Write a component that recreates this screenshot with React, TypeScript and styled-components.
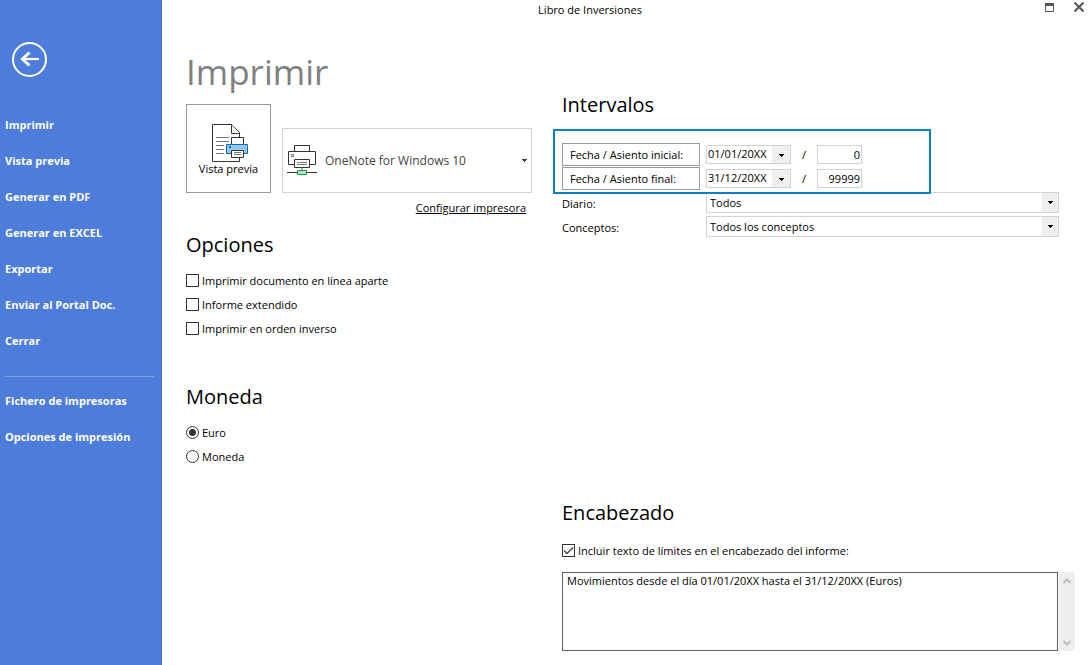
import React from "react";
import styled, { createGlobalStyle } from "styled-components";

const GlobalStyle = createGlobalStyle`
  * { box-sizing: border-box; }
  body {
    margin: 0;
    background: #fff;
    color: #000;
    font: 11px/16px "Open Sans", "Noto Sans", sans-serif;
  }
  button, input, select, textarea { font: inherit; color: inherit; margin: 0; border-radius: 0; }
`;

const Window = styled.div`
  display: flex;
  min-height: 100vh;
`;

const Sidebar = styled.aside`
  flex: 0 0 162px;
  padding: 42px 8px 20px 5px;
  background: #4d7cdb;
  color: #fff;
`;

const BackButton = styled.button`
  display: block;
  width: 36px;
  height: 36px;
  margin-left: 6px;
  padding: 0;
  border: 0;
  background: none;
`;

const Menu = styled.nav`
  display: flex;
  flex-direction: column;
  margin-top: 29px;
`;

const MenuLink = styled.a`
  font-weight: bold;
  line-height: 36px;
  color: inherit;
  text-decoration: none;
  white-space: nowrap;
`;

const Divider = styled.hr`
  width: 100%;
  height: 1px;
  margin: 17px 0 6px;
  border: 0;
  background: #7d9fe5;
`;

const Main = styled.main`
  flex: 1;
  min-width: 0;
`;

const TitleBar = styled.header`
  display: flex;
  height: 20px;
`;

const WindowTitle = styled.div`
  flex: 1;
  text-align: center;
  line-height: 20px;
`;

const WindowButtons = styled.div`
  display: flex;
  flex: 0 0 73px;
  justify-content: flex-end;
  gap: 14px;
  padding-right: 4px;
`;

const WindowButton = styled.button`
  width: 16px;
  height: 14px;
  padding: 0;
  border: 0;
  background: none;
`;

const Columns = styled.div`
  display: grid;
  grid-template-columns: 346px minmax(0, 1fr);
  column-gap: 30px;
  padding: 0 16px 14px 24px;
`;

const PageTitle = styled.h1`
  margin: 26px 0 6px;
  font-size: 35px;
  font-weight: 400;
  line-height: 52px;
  color: #808080;
`;

const SectionTitle = styled.h2<{ $above?: number; $below?: number }>`
  margin: ${(p) => p.$above ?? 0}px 0 ${(p) => p.$below ?? 10}px;
  font-size: 20px;
  font-weight: 400;
  line-height: 28px;
`;

const PrinterRow = styled.div`
  display: flex;
  align-items: flex-end;
  gap: 11px;
`;

const PreviewButton = styled.button`
  display: flex;
  flex-direction: column;
  align-items: center;
  width: 85px;
  height: 89px;
  padding: 19px 0 0;
  border: 1px solid #999;
  background: #fff;
  line-height: 14px;
`;

const SelectWrap = styled.div`
  position: relative;
  flex: 1;
  min-width: 0;
`;

const PrinterSelect = styled.select`
  display: block;
  appearance: none;
  width: 100%;
  height: 65px;
  padding: 0 20px 0 42px;
  border: 1px solid #d3d3d3;
  background: #fff;
  font-size: 12px;
  color: #444;
`;

const PrinterGlyph = styled.span`
  position: absolute;
  top: 17px;
  left: 5px;
  height: 32px;
  pointer-events: none;
`;

const PrinterArrow = styled.span`
  position: absolute;
  top: 0;
  right: 5px;
  display: flex;
  align-items: center;
  height: 100%;
  pointer-events: none;
`;

const ConfigLine = styled.div`
  padding: 6px 6px 0 0;
  text-align: right;
  line-height: 18px;
`;

const ConfigLink = styled.a`
  color: #000;
`;

const Choice = styled.label`
  display: flex;
  align-items: center;
  gap: 3px;
  height: 24px;
`;

const Check = styled.input`
  appearance: none;
  width: 13px;
  height: 13px;
  margin-bottom: 1px;
  border: 1px solid #333;
  background: #fff;
  &:checked {
    background: #fff
      url("data:image/svg+xml,%3Csvg xmlns='http://www.w3.org/2000/svg' width='11' height='11'%3E%3Cpath d='M1 5.5L4 8.5L10 2.5' fill='none' stroke='%23444' stroke-width='1.3'/%3E%3C/svg%3E")
      center no-repeat;
  }
`;

const Radio = styled.input`
  appearance: none;
  width: 13px;
  height: 13px;
  margin-bottom: 1px;
  border: 1px solid #333;
  border-radius: 50%;
  background: #fff;
  &:checked {
    background: radial-gradient(circle, #333 3px, #fff 4px);
  }
`;

const RightColumn = styled.div`
  padding-top: 71px;
`;

const Fields = styled.div`
  padding-right: 16px;
`;

const DateGroup = styled.div`
  position: relative;
  z-index: 1;
  width: 378px;
  height: 65px;
  margin: 0 0 -2px -9px;
  padding: 11px 0 0 7px;
  border: 2px solid #0a80c8;
`;

const DateRow = styled.div`
  display: flex;
  align-items: center;
  height: 24px;
`;

const RangeButton = styled.button`
  width: 138px;
  height: 23px;
  padding: 1px 7px 0;
  border: 1px solid #999;
  background: #fff;
  text-align: left;
`;

const DateCombo = styled.div`
  display: flex;
  width: 85px;
  height: 19px;
  margin-left: 6px;
  border: 1px solid #d3d3d3;
`;

const DateInput = styled.input`
  flex: 1;
  min-width: 0;
  padding: 0 0 0 1px;
  border: 0;
  background: #fff;
`;

const DropButton = styled.button`
  display: flex;
  align-items: center;
  justify-content: center;
  width: 18px;
  padding: 2px 0 0;
  border: 0;
  background: #efefef;
`;

const Slash = styled.span`
  width: 26px;
  padding-top: 2px;
  text-align: center;
`;

const NumberInput = styled.input`
  width: 45px;
  height: 19px;
  padding: 0 1px;
  border: 1px solid #d3d3d3;
  background: #fff;
  text-align: right;
`;

const FieldRow = styled.div`
  display: flex;
  align-items: center;
  height: 21px;
  margin-bottom: 3px;
`;

const FieldLabel = styled.label`
  flex: 0 0 144px;
  padding-top: 3px;
`;

const FieldSelect = styled.select`
  display: block;
  appearance: none;
  width: 100%;
  height: 21px;
  padding: 0 20px 0 3px;
  border: 1px solid #d3d3d3;
  background: #fff;
`;

const FieldArrow = styled.span`
  position: absolute;
  top: 1px;
  right: 1px;
  bottom: 1px;
  display: flex;
  align-items: center;
  justify-content: center;
  width: 16px;
  background: #efefef;
  pointer-events: none;
`;

const TextRow = styled.div`
  display: flex;
  gap: 1px;
  height: 79px;
  margin-top: 9px;
`;

const HeaderText = styled.textarea`
  flex: 1;
  min-width: 0;
  padding: 0 4px;
  border: 1px solid #606060;
  background: #fff;
  resize: none;
  overflow: hidden;
`;

const ScrollStrip = styled.div`
  display: flex;
  flex-direction: column;
  justify-content: space-between;
  width: 16px;
  background: #efefef;
`;

const ScrollButton = styled.button`
  display: flex;
  align-items: center;
  justify-content: center;
  height: 17px;
  padding: 0;
  border: 0;
  background: none;
`;

const Arrow = ({ color = "#000" }: { color?: string }) => (
  <svg width="5" height="3" viewBox="0 0 5 3" shapeRendering="crispEdges" aria-hidden="true">
    <path d="M0 0H5V1H4V2H3V3H2V2H1V1H0Z" fill={color} />
  </svg>
);

const Chevron = ({ down }: { down?: boolean }) => (
  <svg width="8" height="6" viewBox="0 0 8 6" aria-hidden="true">
    <path d={down ? "M.5 1L4 4.5L7.5 1" : "M.5 5L4 1.5L7.5 5"} fill="none" stroke="#bcbcbc" strokeWidth="2" />
  </svg>
);

const BackIcon = () => (
  <svg width="36" height="36" viewBox="0 0 36 36" fill="none" stroke="#fff" aria-hidden="true">
    <circle cx="18.5" cy="17.5" r="16.5" strokeWidth="2" />
    <path d="M11 17H28" strokeWidth="2.2" />
    <path d="M18.5 10.5L11.5 17L18.5 23.5" strokeWidth="3" />
  </svg>
);

const PreviewIcon = () => (
  <svg width="41" height="38" viewBox="-4 0 41 38" fill="#fff" stroke="#333" aria-hidden="true">
    <path d="M.5 .5H19.5L27.5 8.5V37.5H.5Z" />
    <path d="M19.5 .5V9.5H27.5" />
    <path d="M4 13.5H17M4 17.5H17M4 21.5H12M4 25.5H12M4 29.5H12" stroke="#777" />
    <path d="M19.5 13.5H31.5V20.5H19.5Z" />
    <path d="M14.5 20.5H35.5V29.5H14.5Z" fill="#91c8f0" stroke="#1169b0" />
    <path d="M17 22H19V24H17Z" fill="#1169b0" stroke="none" />
    <path d="M19.5 26.5H31.5V33.5H19.5Z" />
    <path d="M22 28.5H29M22 30.5H29" stroke="#777" />
  </svg>
);

const PrinterIcon = () => (
  <svg width="30" height="31" viewBox="0 0 30 31" fill="#fff" stroke="#333" aria-hidden="true">
    <path d="M7.5 .5H22.5V6.5H7.5Z" />
    <path d="M1.5 6.5H28.5V19.5H1.5Z" />
    <path d="M4.5 9.5H6.5V11.5H4.5Z" stroke="#777" />
    <path d="M7.5 14.5H22.5V22.5H7.5Z" />
    <path d="M10 17.5H20M10 19.5H20" stroke="#777" />
    <path d="M15 23V26" stroke="#aaa" strokeWidth="2" />
    <path d="M0 27.5H30" />
    <path d="M10.5 25.5H19.5V29.5H10.5Z" fill="#b5dfc2" stroke="#169c46" />
  </svg>
);

const menu = ["Imprimir", "Vista previa", "Generar en PDF", "Generar en EXCEL", "Exportar", "Enviar al Portal Doc.", "Cerrar"];
const settings = ["Fichero de impresoras", "Opciones de impresión"];
const options = ["Imprimir documento en línea aparte", "Informe extendido", "Imprimir en orden inverso"];
const ranges = [
  { label: "Fecha / Asiento inicial:", date: "01/01/20XX", entry: "0" },
  { label: "Fecha / Asiento final:", date: "31/12/20XX", entry: "99999" },
];
const filters = [
  { id: "diario", label: "Diario:", value: "Todos" },
  { id: "conceptos", label: "Conceptos:", value: "Todos los conceptos" },
];

export default function App() {
  return (
    <>
      <GlobalStyle />
      <Window>
        <Sidebar>
          <BackButton aria-label="Volver"><BackIcon /></BackButton>
          <Menu>
            {menu.map((m) => <MenuLink href="#" key={m}>{m}</MenuLink>)}
            <Divider />
            {settings.map((m) => <MenuLink href="#" key={m}>{m}</MenuLink>)}
          </Menu>
        </Sidebar>
        <Main>
          <TitleBar>
            <WindowTitle>Libro de Inversiones</WindowTitle>
            <WindowButtons>
              <WindowButton aria-label="Maximizar">
                <svg width="9" height="9" viewBox="0 0 9 9" aria-hidden="true">
                  <path d="M.5 .5H8.5V8.5H.5Z" fill="none" stroke="#555" />
                  <path d="M0 0H9V3H0Z" fill="#555" />
                </svg>
              </WindowButton>
              <WindowButton aria-label="Cerrar">
                <svg width="10" height="10" viewBox="0 0 10 10" aria-hidden="true">
                  <path d="M.5 .5L9.5 9.5M9.5 .5L.5 9.5" stroke="#555" strokeWidth="2" />
                </svg>
              </WindowButton>
            </WindowButtons>
          </TitleBar>
          <Columns>
            <div>
              <PageTitle>Imprimir</PageTitle>
              <PrinterRow>
                <PreviewButton><PreviewIcon />Vista previa</PreviewButton>
                <SelectWrap>
                  <PrinterSelect aria-label="Impresora"><option>OneNote for Windows 10</option></PrinterSelect>
                  <PrinterGlyph><PrinterIcon /></PrinterGlyph>
                  <PrinterArrow><Arrow color="#444" /></PrinterArrow>
                </SelectWrap>
              </PrinterRow>
              <ConfigLine><ConfigLink href="#">Configurar impresora</ConfigLink></ConfigLine>
              <SectionTitle $above={14}>Opciones</SectionTitle>
              {options.map((o) => <Choice key={o}><Check type="checkbox" />{o}</Choice>)}
              <SectionTitle $above={42}>Moneda</SectionTitle>
              <Choice><Radio type="radio" name="moneda" defaultChecked />Euro</Choice>
              <Choice><Radio type="radio" name="moneda" />Moneda</Choice>
            </div>
            <RightColumn>
              <SectionTitle>Intervalos</SectionTitle>
              <Fields>
                <DateGroup>
                  {ranges.map((r) => (
                    <DateRow key={r.label}>
                      <RangeButton>{r.label}</RangeButton>
                      <DateCombo>
                        <DateInput aria-label={r.label} defaultValue={r.date} />
                        <DropButton aria-label="Abrir calendario"><Arrow /></DropButton>
                      </DateCombo>
                      <Slash>/</Slash>
                      <NumberInput aria-label="Asiento" defaultValue={r.entry} />
                    </DateRow>
                  ))}
                </DateGroup>
                {filters.map((f) => (
                  <FieldRow key={f.id}>
                    <FieldLabel htmlFor={f.id}>{f.label}</FieldLabel>
                    <SelectWrap>
                      <FieldSelect id={f.id}><option>{f.value}</option></FieldSelect>
                      <FieldArrow><Arrow /></FieldArrow>
                    </SelectWrap>
                  </FieldRow>
                ))}
              </Fields>
              <SectionTitle $above={262} $below={12}>Encabezado</SectionTitle>
              <Choice><Check type="checkbox" defaultChecked />Incluir texto de límites en el encabezado del informe:</Choice>
              <TextRow>
                <HeaderText aria-label="Texto del encabezado" defaultValue="Movimientos desde el día 01/01/20XX hasta el 31/12/20XX (Euros)" />
                <ScrollStrip>
                  <ScrollButton aria-label="Subir"><Chevron /></ScrollButton>
                  <ScrollButton aria-label="Bajar"><Chevron down /></ScrollButton>
                </ScrollStrip>
              </TextRow>
            </RightColumn>
          </Columns>
        </Main>
      </Window>
    </>
  );
}
